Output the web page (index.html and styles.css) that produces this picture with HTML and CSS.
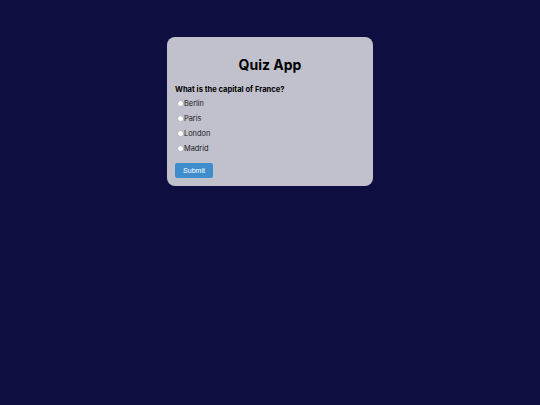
FILE: index.html
```html
<!DOCTYPE html>
<html>
<head>
<meta charset="utf-8">
<link rel="stylesheet" href="styles.css">
</head>
<body>
<div class="card">
  <h1 class="title">Quiz App</h1>
  <p class="question">What is the capital of France?</p>
  <div class="options">
    <label class="option"><span class="radio"></span>Berlin</label>
    <label class="option"><span class="radio"></span>Paris</label>
    <label class="option"><span class="radio"></span>London</label>
    <label class="option"><span class="radio"></span>Madrid</label>
  </div>
  <button class="submit">Submit</button>
</div>
</body>
</html>
```
FILE: styles.css
```css
html, body {
  margin: 0;
  padding: 0;
  background: #0e0e40;
  height: 100%;
}
body {
  font-family: "Inter", "Liberation Sans", sans-serif;
  color: #111;
}
.card {
  width: 190px;
  margin: 37px auto 0;
  padding: 8px 8px 8px 8px;
  background: #c1c1cd;
  border-radius: 8px;
  display: flex;
  flex-direction: column;
  height: 133px;
}
.title {
  margin: 11px 0 0;
  text-align: center;
  font-size: 14px;
  font-weight: 700;
  line-height: 18px;
  color: #000;
}
.question {
  margin: 11px 0 0;
  font-size: 7.6px;
  font-weight: 700;
  line-height: 10px;
  color: #000;
}
.options {
  display: flex;
  flex-direction: column;
  margin-top: 1px;
}
.option {
  display: flex;
  align-items: center;
  height: 15px;
  font-size: 7.4px;
  color: #1a1a1a;
  padding-left: 3px;
}
.radio {
  width: 5px;
  height: 5px;
  border-radius: 50%;
  background: #fff;
  box-shadow: 0 0 0 0.3px #999;
  margin-right: 1px;
}
.submit {
  align-self: flex-start;
  margin-top: 7px;
  width: 38px;
  height: 16px;
  border: none;
  border-radius: 2px;
  background: #3e8dcc;
  color: #fff;
  font-family: "Liberation Sans", Arial, sans-serif;
  font-size: 7px;
  padding: 0;
}
```
